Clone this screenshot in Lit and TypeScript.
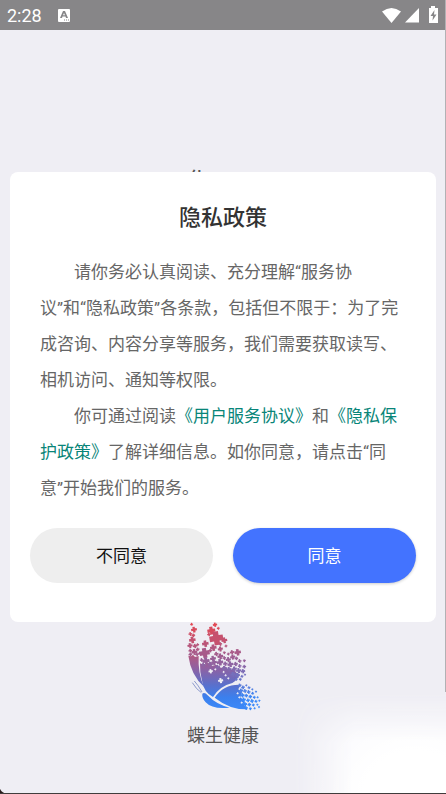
import { LitElement, html, css, svg } from "lit";
import { customElement } from "lit/decorators.js";

// Confetti crosses of the butterfly wings: centre x, centre y, half size.
const CROSSES: number[][] = [
  [62, 43, 4], [69, 59, 8], [58, 72, 5], [67, 76, 5], [64, 90, 9], [57, 107, 7], [72, 108, 6], [80, 104, 4],
  [58, 122, 5], [70, 126, 8], [80, 118, 5], [78, 133, 5], [58, 133, 5], [86, 130, 4],
  [132, 44, 6], [121, 62, 11], [142, 55, 4], [136, 85, 19], [114, 73, 5], [160, 91, 8], [148, 102, 5],
  [103, 101, 9], [127, 113, 9], [101, 129, 14], [148, 117, 7], [165, 108, 4], [160, 128, 4], [118, 122, 5],
  [136, 132, 6], [105, 153, 10], [126, 146, 8], [148, 139, 8], [92, 150, 5], [97, 165, 6], [118, 163, 7],
  [129, 157, 8], [147, 157, 9], [160, 144, 5], [172, 132, 4], [183, 127, 6], [200, 127, 9], [185, 141, 7],
  [172, 149, 7], [196, 145, 5], [163, 161, 6], [178, 163, 8], [194, 162, 6], [206, 153, 5], [220, 152, 4],
  [206, 168, 5], [220, 170, 5], [216, 184, 6], [222, 194, 3], [203, 182, 7], [190, 177, 7], [174, 178, 7],
  [160, 175, 7], [140, 172, 7], [199, 196, 7], [213, 199, 4], [186, 193, 7], [208, 208, 4], [196, 208, 4],
  [206, 226, 5], [216, 232, 5], [226, 226, 3], [234, 233, 4], [244, 238, 3], [222, 243, 5], [233, 246, 5],
  [245, 250, 4], [255, 245, 3], [210, 242, 6], [214, 256, 6], [226, 257, 5], [238, 260, 5], [250, 262, 4],
  [260, 262, 3], [265, 272, 3], [218, 269, 6], [231, 271, 5], [243, 273, 5], [255, 274, 4], [222, 283, 6],
  [235, 284, 5], [247, 285, 4], [259, 284, 3], [225, 294, 5], [238, 296, 4], [251, 295, 3], [264, 291, 3],
];

// Small gaps in the wings, in the page colour.
const HOLES: number[][] = [
  [119, 184, 6], [149, 212, 7], [133, 178, 3], [158, 186, 3], [172, 205, 3],
  [164, 196, 3], [205, 262, 3], [200, 250, 3], [212, 278, 3],
];

// A plus sign turned a few degrees, as one path.
const cross = ([x, y, r]: number[], fill: string) => {
  const s = r * 1.08;
  const t = r * 0.44;
  const d = `M${-t} ${-s}H${t}V${-t}H${s}V${t}H${t}V${s}H${-t}V${t}H${-s}V${-t}H${-t}Z`;
  return svg`<path fill=${fill} transform="translate(${x} ${y}) rotate(-10)" d=${d} />`;
};

// Red at the top of the wings, through purple, to blue.
const shade = (y: number) => {
  const k = Math.min(1, Math.max(0, (y - 36) / 230));
  const mix = (a: number, b: number, c: number) =>
    Math.round(k < 0.5 ? a + (b - a) * k * 2 : b + (c - b) * (k - 0.5) * 2);
  return `rgb(${mix(232, 152, 56)},${mix(70, 96, 136)},${mix(78, 152, 250)})`;
};

const butterfly = html`
  <svg class="logo" viewBox="45 36 225 270" aria-hidden="true">
    <defs>
      <linearGradient id="wing" gradientUnits="userSpaceOnUse" x1="120" y1="36" x2="120" y2="306">
        <stop offset="0" stop-color="#e6464e" />
        <stop offset="0.25" stop-color="#cf5365" />
        <stop offset="0.5" stop-color="#93609f" />
        <stop offset="0.7" stop-color="#5a70cc" />
        <stop offset="0.84" stop-color="#3b80ee" />
        <stop offset="1" stop-color="#3d8bfa" />
      </linearGradient>
    </defs>
    <g fill="url(#wing)">
      <path d="M52 137 L60 139 L66 134 L72 141 L83 138 Q80 190 99 230 Q60 196 52 137Z" />
      <path d="M87 160 L100 165 L112 158 L124 168 L135 164 L150 174 L162 169 L174 180 L188 178 L196 188 L206 192 Q198 212 184 219 Q146 228 126 261 Q98 246 93 212 Q86 188 87 160Z" />
      <path d="M131 263 Q158 222 208 224 L202 238 L212 248 L208 262 L220 272 L218 284 L230 298 Q178 300 131 263Z" />
      <path d="M94 251 Q101 246 110 256 Q136 284 176 293 Q124 299 104 277 Q92 263 94 251Z" />
    </g>
    <g fill="none" stroke="#5a70b8" stroke-width="2">
      <path d="M93 246 Q82 226 70 213 M91 248 Q76 238 64 218" />
    </g>
    ${CROSSES.map((c) => cross(c, shade(c[1])))}
    ${HOLES.map((c) => cross(c, "#efeef4"))}
  </svg>
`;

@customElement("app-root")
export class AppRoot extends LitElement {
  static styles = css`
    :host {
      display: block;
      font-family: Roboto, "Noto Sans CJK SC", sans-serif;
    }
    .screen {
      position: relative;
      display: flex;
      flex-direction: column;
      box-sizing: border-box;
      min-height: 100vh;
      overflow: hidden;
      background: #efeef4;
      border-bottom: 1px solid #403c3c;
    }
    .status {
      display: flex;
      align-items: center;
      height: 30px;
      padding: 0 7px;
      background: #878688;
      color: #fff;
      font-size: 18px;
    }
    .status svg {
      display: block;
      fill: #fff;
    }
    .badge {
      margin-left: 16px;
    }
    .status .signals {
      margin-left: auto;
    }
    .splash {
      flex: 1;
      display: flex;
      flex-direction: column;
      align-items: center;
      justify-content: space-between;
      padding: 136px 0 43px;
      color: #555;
    }
    .slogan {
      margin: 0;
      width: 74px;
      font-size: 24px;
      line-height: 32px;
    }
    .brand {
      display: flex;
      flex-direction: column;
      align-items: center;
      gap: 10px;
      font-size: 18px;
      line-height: 28px;
    }
    .logo {
      display: block;
      width: 75px;
      height: 90px;
    }
    .edge {
      position: absolute;
      top: 0;
      right: 0;
      bottom: 101px;
      width: 1px;
      background: #b2b1b4;
    }
    .glow {
      position: absolute;
      right: 0;
      bottom: -1px;
      width: 153px;
      height: 102px;
      background:
        radial-gradient(ellipse at 80% 100%, #fff 0, #fff 30%, rgba(255, 255, 255, 0) 80%),
        #f8f8fc;
      -webkit-mask-image: linear-gradient(to bottom, transparent, #000 50%), linear-gradient(to right, transparent, #000 40%);
      -webkit-mask-composite: source-in;
      mask-image: linear-gradient(to bottom, transparent, #000 50%), linear-gradient(to right, transparent, #000 40%);
      mask-composite: intersect;
    }
    .cover {
      position: absolute;
      right: 0;
      bottom: -1px;
      width: 153px;
      height: 1px;
      background: #f4f4f8;
    }
    .corner {
      position: absolute;
      left: 0;
      bottom: 0;
      width: 7px;
      height: 7px;
      background: radial-gradient(circle at 100% 0, transparent 7px, #2a1c1c 8px);
    }
    .overlay {
      position: absolute;
      top: 0;
      right: 0;
      bottom: -1px;
      left: 0;
      display: grid;
      align-items: center;
      padding: 0 10px;
    }
    .dialog {
      padding: 30px 20px 39px;
      border-radius: 8px;
      background: #fff;
    }
    h1 {
      margin: 0 0 20px;
      color: #333;
      font-size: 22px;
      font-weight: 500;
      line-height: 32px;
      text-align: center;
    }
    .policy {
      padding: 0 10px;
      color: #666;
      font-size: 17px;
      line-height: 36px;
    }
    .policy p {
      margin: 0;
      text-indent: 2em;
    }
    a {
      color: #088578;
      text-decoration: none;
    }
    .actions {
      display: grid;
      grid-template-columns: 1fr 1fr;
      gap: 20px;
      margin-top: 22px;
    }
    button {
      height: 55px;
      padding: 0;
      border: 0;
      border-radius: 28px;
      background: #eee;
      color: #111;
      font: 400 17px/24px Roboto, "Noto Sans CJK SC", sans-serif;
      cursor: pointer;
    }
    .agree {
      background: #4373ff;
      color: #fff;
      box-shadow: 0 1px 3px rgba(0, 0, 0, 0.2);
    }
  `;

  render() {
    return html`
      <div class="screen">
        <header class="status">
          <span>2:28</span>
          <svg class="badge" width="12" height="13" viewBox="0 0 12 13" aria-hidden="true">
            <path fill-rule="evenodd" d="M1 0H11Q12 0 12 1V12Q12 13 11 13H1Q0 13 0 12V1Q0 0 1 0ZM5 2L2 9H4L4.500 7.500H7.500L8 9H10L7 2ZM6 4L7 6.300H5ZM6 10.500V11.500H7V10.500ZM8 10.500V11.500H9V10.500ZM10 10.500V11.500H11V10.500Z" />
          </svg>
          <svg class="signals" width="58" height="18" viewBox="0 0 58 18" aria-hidden="true">
            <path d="M1 5.5Q10.5 -1.5 20 5.5L10.5 17Z" />
            <path d="M38 2V16.5H24Z" />
            <path fill-rule="evenodd" d="M50 0H54V2H57V17H48V2H50ZM53.5 4L49.5 10H52L51.5 14.5L55.5 8.5H53Z" />
          </svg>
        </header>
        <main class="splash">
          <p class="slogan">化</p>
          <div class="brand">
            ${butterfly}
            <span>蝶生健康</span>
          </div>
        </main>
        <div class="edge"></div>
        <div class="cover"></div>
        <div class="glow"></div>
        <div class="corner"></div>
        <div class="overlay">
          <section class="dialog" role="dialog" aria-labelledby="title">
            <h1 id="title">隐私政策</h1>
            <div class="policy">
              <p>请你务必认真阅读、充分理解“服务协<br />议”和“隐私政策”各条款，包括但不限于：为了完<br />成咨询、内容分享等服务，我们需要获取读写、<br />相机访问、通知等权限。</p>
              <p>你可通过阅读<a href="#terms">《用户服务协议》</a>和<a href="#privacy">《隐私保<br />护政策》</a>了解详细信息。如你同意，请点击“同<br />意”开始我们的服务。</p>
            </div>
            <div class="actions">
              <button type="button">不同意</button>
              <button type="button" class="agree">同意</button>
            </div>
          </section>
        </div>
      </div>
    `;
  }
}
